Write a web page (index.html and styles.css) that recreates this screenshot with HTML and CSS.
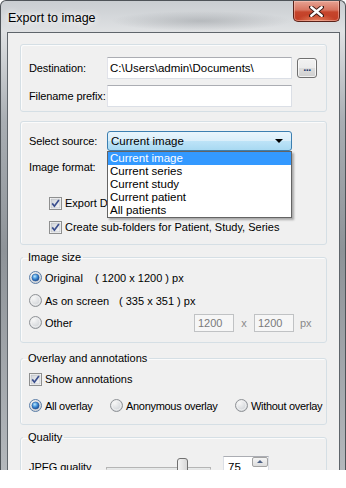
FILE: index.html
```html
<!DOCTYPE html>
<html lang="en">
<head>
  <meta charset="UTF-8">
  <meta name="viewport" content="width=device-width, initial-scale=1.0">
  <link rel="stylesheet" href="styles.css">
  <title>Export to image</title>
</head>
<body>
  <svg class="defs" width="0" height="0">
    <defs>
      <linearGradient id="boxfill" x1="0" y1="0" x2="1" y2="1">
        <stop offset="0" stop-color="#cfd3d8"/>
        <stop offset="1" stop-color="#f7f7f7"/>
      </linearGradient>
      <radialGradient id="radfill" cx="0.35" cy="0.3" r="0.8">
        <stop offset="0" stop-color="#f7f7f7"/>
        <stop offset="1" stop-color="#c9cdd2"/>
      </radialGradient>
      <radialGradient id="dotfill" cx="0.4" cy="0.35" r="0.7">
        <stop offset="0" stop-color="#b9e8fc"/>
        <stop offset="0.5" stop-color="#3f8ed8"/>
        <stop offset="1" stop-color="#16438a"/>
      </radialGradient>
      <symbol id="chk" viewBox="0 0 13 13">
        <rect x="0.5" y="0.5" width="12" height="12" fill="#fff" stroke="#8e8f8f"/>
        <rect x="2" y="2" width="9" height="9" fill="url(#boxfill)" stroke="#aeb3b9" stroke-width="0.6"/>
        <path d="M3.2 6.4 L5.4 9.2 L9.9 2.9" fill="none" stroke="#3b4f8e" stroke-width="1.7"/>
      </symbol>
      <symbol id="rad" viewBox="0 0 13 13">
        <circle cx="6.5" cy="6.5" r="6" fill="url(#radfill)" stroke="#8f9296"/>
        <circle cx="6.5" cy="6.5" r="4.4" fill="none" stroke="#f4f4f4" stroke-width="0.8"/>
      </symbol>
      <symbol id="rad-on" viewBox="0 0 13 13">
        <circle cx="6.5" cy="6.5" r="6" fill="url(#radfill)" stroke="#5d7fa8"/>
        <circle cx="6.5" cy="6.5" r="3.6" fill="url(#dotfill)" stroke="#1c4f90" stroke-width="0.5"/>
      </symbol>
    </defs>
  </svg>

  <div class="window">
    <div class="titlebar">
      <span class="title">Export to image</span>
      <div class="close">
        <svg width="15" height="11" viewBox="0 0 15 11">
          <path d="M2 1 L13 10 M13 1 L2 10" stroke="#3a1a14" stroke-width="4.2" stroke-linecap="round"/>
          <path d="M2.3 1.3 L12.7 9.7 M12.7 1.3 L2.3 9.7" stroke="#fff" stroke-width="2.4" stroke-linecap="round"/>
        </svg>
      </div>
    </div>

    <div class="client">
      <!-- destination -->
      <div class="group dest">
        <div class="row">
          <span class="lbl">Destination:</span>
          <div class="edit">C:\Users\admin\Documents\</div>
          <div class="browse">...</div>
        </div>
        <div class="row">
          <span class="lbl">Filename prefix:</span>
          <div class="edit"></div>
        </div>
      </div>

      <!-- source -->
      <div class="group source">
        <div class="row">
          <span class="lbl">Select source:</span>
          <div class="combo-wrap">
            <div class="combo open">Current image<span class="arrow"></span></div>
            <ul class="dropdown">
              <li class="sel">Current image</li>
              <li>Current series</li>
              <li>Current study</li>
              <li>Current patient</li>
              <li>All patients</li>
            </ul>
          </div>
        </div>
        <div class="row">
          <span class="lbl">Image format:</span>
          <div class="combo">PNG<span class="arrow"></span></div>
        </div>
        <div class="check-row first">
          <svg class="chk"><use href="#chk"/></svg>
          <span>Export DICOM overlay</span>
        </div>
        <div class="check-row">
          <svg class="chk"><use href="#chk"/></svg>
          <span>Create sub-folders for Patient, Study, Series</span>
        </div>
      </div>

      <!-- image size -->
      <fieldset class="group size">
        <legend>Image size</legend>
        <div class="opt-row">
          <svg class="rad"><use href="#rad-on"/></svg>
          <span class="opt-name w-orig">Original</span>
          <span>( 1200 x 1200 ) px</span>
        </div>
        <div class="opt-row">
          <svg class="rad"><use href="#rad"/></svg>
          <span class="opt-name w-screen">As on screen</span>
          <span>( 335 x 351 ) px</span>
        </div>
        <div class="opt-row other">
          <svg class="rad"><use href="#rad"/></svg>
          <span class="opt-name w-other">Other</span>
          <div class="edit small">1200</div>
          <span class="times">x</span>
          <div class="edit small">1200</div>
          <span class="unit">px</span>
        </div>
      </fieldset>

      <!-- overlay -->
      <fieldset class="group overlay">
        <legend>Overlay and annotations</legend>
        <div class="check-row">
          <svg class="chk"><use href="#chk"/></svg>
          <span>Show annotations</span>
        </div>
        <div class="opt-row overlay-opts">
          <span class="opt w-all"><svg class="rad"><use href="#rad-on"/></svg>All overlay</span>
          <span class="opt w-anon"><svg class="rad"><use href="#rad"/></svg>Anonymous overlay</span>
          <span class="opt"><svg class="rad"><use href="#rad"/></svg>Without overlay</span>
        </div>
      </fieldset>

      <!-- quality -->
      <fieldset class="group quality">
        <legend>Quality</legend>
        <div class="row">
          <span class="lbl q">JPEG quality</span>
          <div class="slider">
            <div class="track"></div>
            <div class="thumb"></div>
          </div>
          <div class="spin">
            <span>75</span>
            <div class="spin-up"></div>
          </div>
        </div>
      </fieldset>
    </div>
  </div>
</body>
</html>
```

FILE: styles.css
```css
*, *:before, *:after {
  margin: 0;
  padding: 0;
  box-sizing: border-box;
}
body {
  background: #ffffff;
  font-family: "Liberation Sans", Arial, sans-serif;
  font-size: 11px;
  color: #000;
}
.defs {
  position: absolute;
}

/* window frame */
.window {
  width: 346px;
  height: 470px;
  overflow: hidden;
  display: flex;
  flex-direction: column;
  border: 1px solid #4e5358;
  border-bottom: none;
  border-radius: 6px 6px 0 0;
  background:
    radial-gradient(ellipse 90px 10px at 200px 20px, rgba(120,125,130,0.35), rgba(120,125,130,0)),
    linear-gradient(to bottom, #c9cdd1 0px, #dfe1e3 30px, #a9aeb3 120px, #8e9398 250px, #b4b8bc 470px);
}
.titlebar {
  height: 31px;
  flex-shrink: 0;
  display: flex;
  align-items: flex-start;
  padding-left: 7px;
}
.title {
  margin-top: 10px;
  font-size: 12.5px;
  line-height: 14px;
  text-shadow: 0 0 6px #fff, 0 0 10px #fff;
}
.close {
  margin-left: auto;
  margin-right: 5px;
  width: 47px;
  height: 21px;
  display: flex;
  align-items: center;
  justify-content: center;
  border: 1px solid #5a2219;
  border-top: none;
  border-radius: 0 0 5px 5px;
  background:
    radial-gradient(ellipse 20px 7px at 50% 100%, rgba(240,150,110,0.8), rgba(240,150,110,0)),
    linear-gradient(to bottom, #e7a393 0%, #d77460 45%, #c6452c 55%, #c13d25 100%);
  box-shadow: inset 0 0 0 1px rgba(255,210,200,0.45);
}

.client {
  flex: 1;
  margin: 0 5px 0 6px;
  padding: 11px 12px 0 12px;
  border: 1px solid #5f656b;
  border-bottom: none;
  background: #f0f0f0;
  white-space: nowrap;
}

/* group boxes */
.group {
  border: 1px solid #d5dfe5;
  border-radius: 3px;
  box-shadow: inset 1px 1px 0 #fbfbfb;
  padding-left: 8px;
  padding-right: 8px;
  min-width: 0;
}
legend {
  font-size: 11px;
  line-height: 14px;
  padding: 0 2px 0 5px;
  margin-left: -6px;
}
.dest {
  padding-top: 12px;
  padding-bottom: 4px;
  display: flex;
  flex-direction: column;
  gap: 6px;
}
.source {
  margin-top: 9px;
  padding-top: 9px;
  padding-bottom: 9px;
}
.size {
  margin-top: 5px;
  padding-top: 4px;
  padding-bottom: 10px;
}
.overlay {
  margin-top: 8px;
  padding-top: 6px;
  padding-bottom: 9px;
}
.quality {
  margin-top: 5px;
  padding-top: 12px;
  padding-bottom: 10px;
}

.row {
  display: flex;
  align-items: center;
}
.source .row {
  height: 20px;
}
.source .row + .row {
  margin-top: 6px;
}
.lbl {
  width: 78px;
  flex-shrink: 0;
  letter-spacing: -0.1px;
}
.lbl.q {
  width: 77px;
}

/* edit boxes */
.edit {
  width: 185px;
  height: 22px;
  flex-shrink: 0;
  background: #fff;
  border: 1px solid #dbdfe6;
  border-top-color: #abadb3;
  border-left-color: #e2e3ea;
  padding: 3px 2px;
  line-height: 14px;
  font-size: 11.5px;
}
.edit.small {
  width: 40px;
  height: 18px;
  padding: 1px 3px;
  background: #f6f6f6;
  border-color: #c0c2c4;
  color: #7a7a7a;
  font-size: 11px;
}
.browse {
  margin-left: 5px;
  width: 20px;
  height: 20px;
  flex-shrink: 0;
  border: 1px solid #707070;
  border-radius: 3px;
  background: linear-gradient(to bottom, #f2f2f2 0%, #ebebeb 50%, #dddddd 51%, #cfcfcf 100%);
  box-shadow: inset 0 0 0 1px rgba(255,255,255,0.7);
  text-align: center;
  line-height: 16px;
  font-size: 11px;
  font-weight: bold;
  color: #27406e;
  letter-spacing: -0.5px;
}

/* combo + dropdown */
.combo-wrap {
  position: relative;
}
.combo {
  position: relative;
  width: 185px;
  height: 20px;
  padding: 2px 3px;
  border: 1px solid #a8acb2;
  border-radius: 3px;
  background: linear-gradient(to bottom, #f2f2f2, #dcdcdc);
  font-size: 11.5px;
  line-height: 15px;
}
.combo.open {
  border-color: #3c7fb1;
  background: linear-gradient(to bottom, #e9f5fc 0%, #d9eefa 50%, #bde3f7 51%, #a8d9f2 100%);
}
.arrow {
  position: absolute;
  right: 8px;
  top: 7px;
  border-left: 4px solid transparent;
  border-right: 4px solid transparent;
  border-top: 4px solid #000;
}
.dropdown {
  position: absolute;
  top: 100%;
  left: 0;
  z-index: 5;
  width: 185px;
  list-style: none;
  background: #fff;
  border: 1px solid #646464;
  box-shadow: 2px 2px 2px rgba(0,0,0,0.3);
  font-size: 11.5px;
}
.dropdown li {
  height: 13px;
  line-height: 13px;
  padding-left: 2px;
}
.dropdown li.sel {
  background: #3399ff;
  color: #fff;
}

/* check boxes and radios */
.check-row {
  display: flex;
  align-items: center;
  height: 16px;
  gap: 3px;
}
.source .check-row {
  padding-left: 20px;
  margin-top: 8px;
}
.source .check-row.first {
  margin-top: 18px;
}
.chk, .rad {
  width: 13px;
  height: 13px;
  flex-shrink: 0;
}
.opt-row {
  display: flex;
  align-items: center;
  height: 19px;
  gap: 3px;
}
.opt-row + .opt-row {
  margin-top: 4px;
}
.opt-row.other {
  margin-top: 3px;
}
.opt-name.w-orig { width: 47px; }
.opt-name.w-screen { width: 71px; }
.opt-name.w-other { width: 146px; }
.times {
  width: 20px;
  text-align: center;
  color: #8a8a8a;
  margin: 0 -3px;
}
.unit {
  margin-left: 3px;
  color: #8a8a8a;
}
.overlay-opts {
  margin-top: 9px;
  letter-spacing: -0.3px;
}
.opt {
  display: flex;
  align-items: center;
  gap: 3px;
  flex-shrink: 0;
}
.opt.w-all { width: 78px; }
.opt.w-anon { width: 122px; }

/* quality */
.quality .row {
  height: 22px;
}
.slider {
  position: relative;
  width: 105px;
  height: 22px;
}
.track {
  position: absolute;
  left: 0;
  right: 0;
  top: 11px;
  height: 3px;
  border: 1px solid #b5b5b5;
  border-bottom-color: #e6e6e6;
  background: #e7eaea;
}
.thumb {
  position: absolute;
  left: 71px;
  top: 2px;
  width: 11px;
  height: 20px;
  border: 1px solid #707070;
  border-radius: 3px 3px 0 0;
  background: linear-gradient(to right, #f4f4f4, #d8d8d8);
}
.spin {
  position: relative;
  margin-left: 12px;
  width: 46px;
  height: 22px;
  background: #fff;
  border: 1px solid #dbdfe6;
  border-top-color: #abadb3;
  padding: 3px 4px;
  font-size: 11.5px;
  line-height: 14px;
}
.spin-up {
  position: absolute;
  right: 0;
  top: 0;
  width: 16px;
  height: 10px;
  border: 1px solid #a3a3a3;
  border-radius: 2px;
  background: linear-gradient(to bottom, #f5f5f5, #dddddd);
}
.spin-up:after {
  content: "";
  position: absolute;
  left: 4px;
  top: 2px;
  border-left: 3px solid transparent;
  border-right: 3px solid transparent;
  border-bottom: 3px solid #4d6185;
}
```
